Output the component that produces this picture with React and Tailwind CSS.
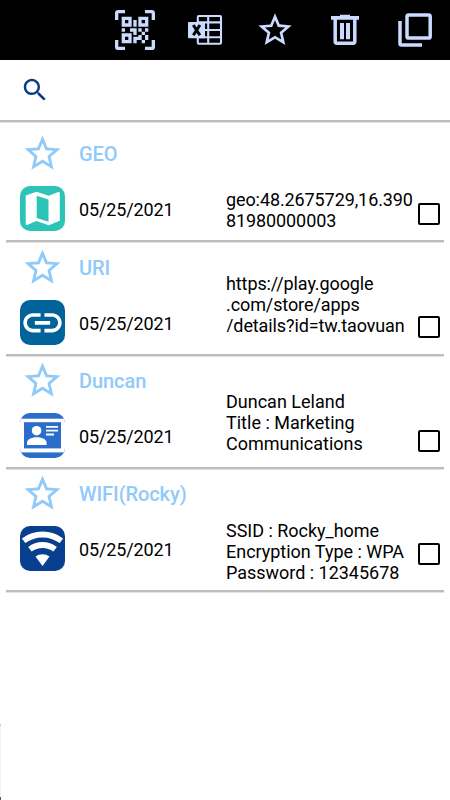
import React, { useState } from 'react';
import clsx from 'clsx';

const STAR_PATH =
  'M22 9.24l-7.19-.62L12 2 9.19 8.63 2 9.24l5.46 4.73L5.82 21 12 17.27 18.18 21l-1.63-7.03L22 9.24zM12 15.4l-3.76 2.27 1-4.28-3.32-2.88 4.38-.38L12 6.1l1.71 4.04 4.38.38-3.32 2.88 1 4.28L12 15.4z';

const StarIcon = ({ className }) => (
  <svg viewBox="0 0 24 24" fill="currentColor" className={className}>
    <path d={STAR_PATH} />
  </svg>
);

const QrScanIcon = () => (
  <svg viewBox="0 0 24 24" fill="currentColor" className="size-10">
    <path d="M4,4H10V10H4V4M20,4V10H14V4H20M14,15H16V13H14V11H16V13H18V11H20V13H18V15H20V18H18V20H16V18H13V20H11V16H14V15M16,15V18H18V15H16M4,20V14H10V20H4M6,6V8H8V6H6M16,6V8H18V6H16M6,16V18H8V16H6M4,11H6V13H4V11M9,11H13V15H11V13H9V11M11,6H13V10H11V6M2,2V6H0V2A2,2 0 0,1 2,0H6V2H2M22,0A2,2 0 0,1 24,2V6H22V2H18V0H22M2,18V22H6V24H2A2,2 0 0,1 0,22V18H2M22,22V18H24V22A2,2 0 0,1 22,24H18V22H22Z" />
  </svg>
);

const ExcelIcon = () => (
  <svg viewBox="0 0 40 40" fill="none" className="size-10">
    <rect x="12.8" y="6" width="23.2" height="27.8" rx="1" stroke="currentColor" strokeWidth="2.1" />
    <path d="M23.2 6v28M12 12.4h24M20 20h16M12 27.2h24" stroke="currentColor" strokeWidth="2.1" />
    <rect x="3" y="12" width="17" height="16.2" rx="1" fill="currentColor" />
    <path d="M8.3 15l6.6 10.2M14.9 15l-6.6 10.2" stroke="#000" strokeWidth="3" />
  </svg>
);

const TrashIcon = () => (
  <svg viewBox="0 0 40 40" fill="none" className="size-10">
    <path d="M6 6h9V4.8h10V6h9v3.8H6z" fill="currentColor" />
    <path d="M10.2 9v22.6a1.7 1.7 0 0 0 1.7 1.7h16.2a1.7 1.7 0 0 0 1.7-1.7V9" stroke="currentColor" strokeWidth="3.5" />
    <path d="M17 13v16.2M23 13v16.2" stroke="currentColor" strokeWidth="4" />
  </svg>
);

const SelectAllIcon = () => (
  <svg viewBox="0 0 40 40" fill="none" stroke="currentColor" strokeWidth="3.5" className="size-10">
    <rect x="12" y="4.9" width="23.2" height="23.2" rx="1.7" />
    <path d="M5 11v22.6a1.5 1.5 0 0 0 1.5 1.5H27" />
  </svg>
);

const MapIcon = () => (
  <svg viewBox="0 0 45 45" className="size-full">
    <path d="M5.7 9.6l10.8-3.8 12.2 3.9 9.6-3.7q1.5-.3 1.5 1v27.7l-11.1 4.5-12.3-4.2-9.4 3.9q-1.3.3-1.3-1z" fill="#fff" />
    <path d="M16.7 9.7l11.8 3.8v22.3l-11.8-3.8z" fill="#2bc4b6" />
  </svg>
);

const LinkIcon = () => (
  <svg viewBox="0 0 45 45" className="size-full">
    <g transform="translate(-.5 -.2) scale(1.917)" fill="#fff">
      <path d="M3.9 12c0-1.71 1.39-3.1 3.1-3.1h4V7H7c-2.76 0-5 2.24-5 5s2.24 5 5 5h4v-1.9H7c-1.71 0-3.1-1.39-3.1-3.1zM8 13h8v-2H8v2zm9-6h-4v1.9h4c1.71 0 3.1 1.39 3.1 3.1s-1.39 3.1-3.1 3.1h-4V17h4c2.76 0 5-2.24 5-5s-2.24-5-5-5z" />
    </g>
  </svg>
);

const ContactIcon = () => (
  <svg viewBox="0 0 45 45" className="size-full">
    <rect x="0" y="5.7" width="45" height="33.7" fill="#fff" />
    <rect x="4" y="9.2" width="37" height="26.2" fill="#2a6dcb" />
    <circle cx="16.6" cy="17.7" r="4.8" fill="#fff" />
    <path d="M7 32v-2.4c0-3.6 5.8-5.4 9.8-5.4s9.8 1.8 9.8 5.4V32z" fill="#fff" />
    <path d="M26 13.9h12M26 17.7h12M26 21.5h8" stroke="#fff" strokeWidth="1.8" />
  </svg>
);

const WifiIcon = () => (
  <svg viewBox="0 0 45 45" fill="none" className="size-full">
    <path d="M3.6 14.8a31.5 31.5 0 0 1 37.8 0" stroke="#fff" strokeWidth="5.8" />
    <path d="M9.9 23.2a21 21 0 0 1 25.2 0" stroke="#fff" strokeWidth="5.8" />
    <path d="M22.5 40l-7-9.4a12 12 0 0 1 14 0z" fill="#fff" />
  </svg>
);

const records = [
  {
    id: 1,
    title: 'GEO',
    date: '05/25/2021',
    icon: MapIcon,
    iconClass: 'bg-[#2bc4b6]',
    rowClass: 'h-[113px]',
    leftClass: 'pt-[2px]',
    detailClass: 'pt-[60px] tracking-[-0.1px]',
    lines: ['geo:48.2675729,16.390', '81980000003'],
  },
  {
    id: 2,
    title: 'URI',
    date: '05/25/2021',
    icon: LinkIcon,
    iconClass: 'bg-[#00639a]',
    rowClass: 'h-[114px]',
    leftClass: 'pt-[3px]',
    detailClass: 'pt-[31px] tracking-[-0.1px]',
    // the last line is cut just below the baseline
    lines: ['https://play.google', '.com/store/apps', '/details?id=tw.taoyuan'],
    clipped: true,
  },
  {
    id: 3,
    title: 'Duncan',
    date: '05/25/2021',
    icon: ContactIcon,
    iconClass: 'bg-[#2a6dcb]',
    rowClass: 'h-[113px]',
    leftClass: 'pt-[2px]',
    detailClass: 'pt-[35px]',
    lines: ['Duncan Leland', 'Title : Marketing', 'Communications'],
  },
  {
    id: 4,
    title: 'WIFI(Rocky)',
    date: '05/25/2021',
    icon: WifiIcon,
    iconClass: 'bg-[#08408f]',
    rowClass: 'h-[123px]',
    leftClass: 'pt-[2px]',
    detailClass: 'pt-[51px] tracking-[-0.02px]',
    lines: ['SSID : Rocky_home', 'Encryption Type : WPA', 'Password : 12345678'],
  },
];

const RecordRow = ({ record, checked, onToggle }) => {
  const Icon = record.icon;

  return (
    <li className={clsx('flex border-b-2 border-[#bdbdbd] pl-[14px] shadow-[0_1px_0_#e2e2e2]', record.rowClass)}>
      <div className={clsx('w-[206px] shrink-0', record.leftClass)}>
        <div className="flex h-[45px] items-center">
          <StarIcon className="ml-[1px] size-[43px] text-[#90caf9]" />
          <span className="ml-[15px] pt-px text-[20px] leading-6 font-medium tracking-[-0.08px] text-[#90caf9]">
            {record.title}
          </span>
        </div>
        <div className="mt-[10px] flex h-[45px] items-center">
          <div className={clsx('size-[45px] overflow-hidden rounded-[10px]', record.iconClass)}>
            <Icon />
          </div>
          <span className="ml-[14px] pt-[2px] text-[18px] leading-[21px] tracking-[-0.13px]">{record.date}</span>
        </div>
      </div>

      <div className={clsx('w-[192px] shrink-0 text-[18px] leading-[21px] whitespace-nowrap', record.detailClass)}>
        <div className={clsx(record.clipped && 'h-[59px] overflow-hidden')}>
          {record.lines.map((line) => (
            <p key={line}>{line}</p>
          ))}
        </div>
      </div>

      <button
        onClick={onToggle}
        className={clsx('mt-[74px] size-[22px] shrink-0 rounded-[2px] border-2 border-black', checked && 'bg-black')}
      />
    </li>
  );
};

export default function App() {
  const [selected, setSelected] = useState([]);

  const toggle = (id) => {
    setSelected(selected.includes(id) ? selected.filter((item) => item !== id) : [...selected, id]);
  };

  return (
    <div className="relative h-[800px] w-[450px] overflow-hidden bg-white font-['Roboto',sans-serif] text-black">
      <header className="flex h-[60px] items-center justify-end gap-[30px] bg-black pr-[15px] text-[#cbdaff]">
        <QrScanIcon />
        <ExcelIcon />
        <StarIcon className="size-10" />
        <TrashIcon />
        <SelectAllIcon />
      </header>

      <div className="flex h-[62px] items-center border-b-2 border-[#bdbdbd] pl-5 shadow-[0_1px_0_#e2e2e2]">
        <svg viewBox="0 0 24 24" className="size-[30px]" fill="#0d3b85">
          <path d="M15.5 14h-.79l-.28-.27C15.41 12.59 16 11.11 16 9.5 16 5.91 13.09 3 9.5 3S3 5.91 3 9.5 5.91 16 9.5 16c1.61 0 3.09-.59 4.23-1.57l.27.28v.79l5 4.99L20.49 19l-4.99-5zm-6 0C7.01 14 5 11.99 5 9.5S7.01 5 9.5 5 14 7.01 14 9.5 11.99 14 9.5 14z" />
        </svg>
      </div>

      <ul className="mr-[6px] ml-[6px] pt-[7px]">
        {records.map((record) => (
          <RecordRow
            key={record.id}
            record={record}
            checked={selected.includes(record.id)}
            onToggle={() => toggle(record.id)}
          />
        ))}
      </ul>

      {/* edge of the drawer handle */}
      <div className="absolute bottom-0 left-0 h-[76px] w-px border-t-2 border-b-3 border-t-[#cccccc] border-b-[#555555] bg-[#f3f3f3]" />
    </div>
  );
}
